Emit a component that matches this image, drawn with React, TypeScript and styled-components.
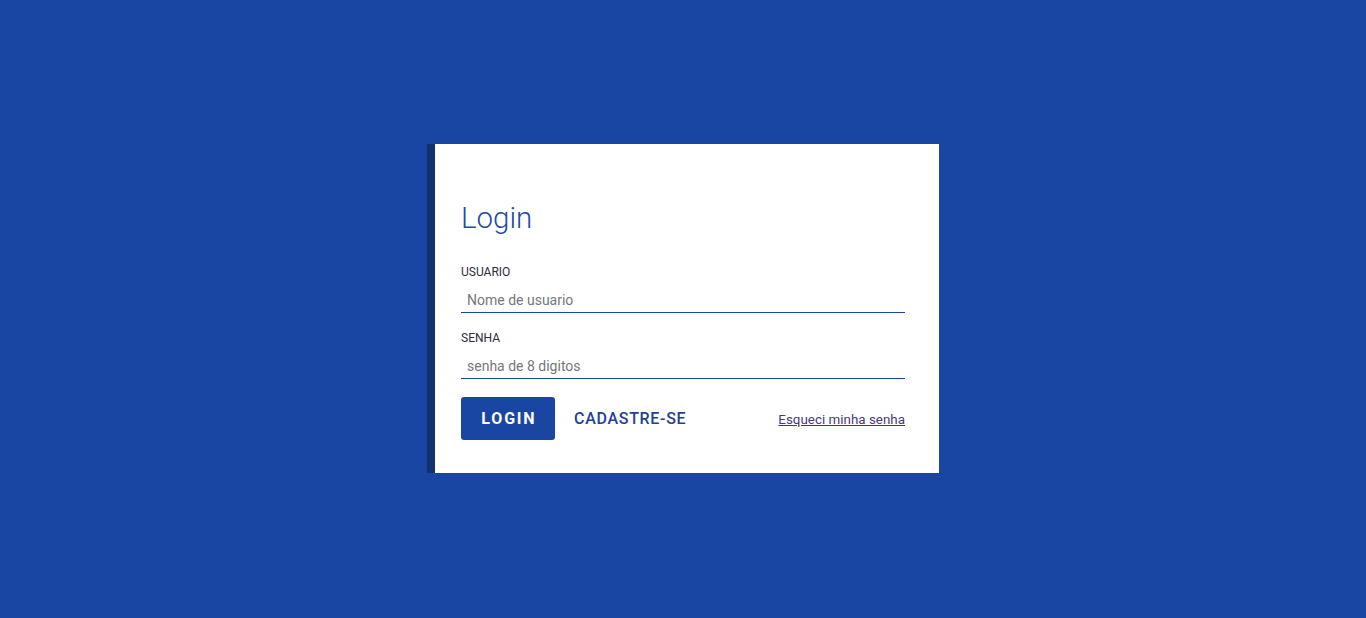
import React from "react";
import styled, { createGlobalStyle } from "styled-components";

const Global = createGlobalStyle`
  html, body { margin: 0; padding: 0; }
  body { background: #1a46a3; font-family: Roboto, "Liberation Sans", sans-serif; }
  * { box-sizing: border-box; }
`;

const Page = styled.main`
  min-height: 100vh;
  padding-bottom: 1px;
  display: flex;
  align-items: center;
  justify-content: center;
`;

const Card = styled.form`
  width: 512px;
  height: 329px;
  background: #ffffff;
  border-left: 8px solid #13306f;
  padding: 56px 34px 33px 26px;
  display: flex;
  flex-direction: column;
`;

const Title = styled.h1`
  margin: 0 0 28px;
  font-size: 29.5px;
  line-height: 36px;
  font-weight: 300;
  color: #1f4aa6;
`;

const Field = styled.div<{ $gap?: number }>`
  display: flex;
  flex-direction: column;
  margin-bottom: ${(p) => p.$gap ?? 0}px;
`;

const Label = styled.label`
  font-size: 12px;
  line-height: 16px;
  color: #2b2b3a;
  margin-bottom: 4px;
`;

const Input = styled.input`
  height: 29px;
  border: 0;
  border-bottom: 1px solid #1a46a3;
  border-radius: 0;
  padding: 4px 6px 0;
  font-family: Roboto, "Liberation Sans", sans-serif;
  font-size: 14px;
  color: #333;
  outline: none;
  background: transparent;
  &::placeholder { color: #777; }
`;

const Actions = styled.div`
  display: flex;
  align-items: center;
`;

const PrimaryButton = styled.button`
  width: 94px;
  height: 43px;
  padding: 0;
  background: #1a46a3;
  color: #fff;
  border: none;
  border-radius: 3px;
  font-family: Roboto, "Liberation Sans", sans-serif;
  font-weight: 700;
  font-size: 16px;
  letter-spacing: 1.8px;
  text-indent: 1.8px;
  cursor: pointer;
`;

const TextButton = styled.button`
  margin-left: 19px;
  background: none;
  border: none;
  padding: 0;
  font-family: Roboto, "Liberation Sans", sans-serif;
  font-weight: 500;
  font-size: 16px;
  letter-spacing: 0.7px;
  color: #233f96;
  cursor: pointer;
`;

const Link = styled.a`
  margin-left: auto;
  padding-top: 2px;
  font-size: 13.4px;
  color: #4a3a78;
  text-decoration: underline;
  text-decoration-color: #5a2a8a;
`;

export default function App() {
  return (
    <>
      <Global />
      <Page>
        <Card onSubmit={(e) => e.preventDefault()}>
          <Title>Login</Title>
          <Field $gap={17}>
            <Label>USUARIO</Label>
            <Input placeholder="Nome de usuario" />
          </Field>
          <Field $gap={18}>
            <Label>SENHA</Label>
            <Input type="password" placeholder="senha de 8 digitos" />
          </Field>
          <Actions>
            <PrimaryButton type="submit">LOGIN</PrimaryButton>
            <TextButton type="button">CADASTRE-SE</TextButton>
            <Link href="#">Esqueci minha senha</Link>
          </Actions>
        </Card>
      </Page>
    </>
  );
}
